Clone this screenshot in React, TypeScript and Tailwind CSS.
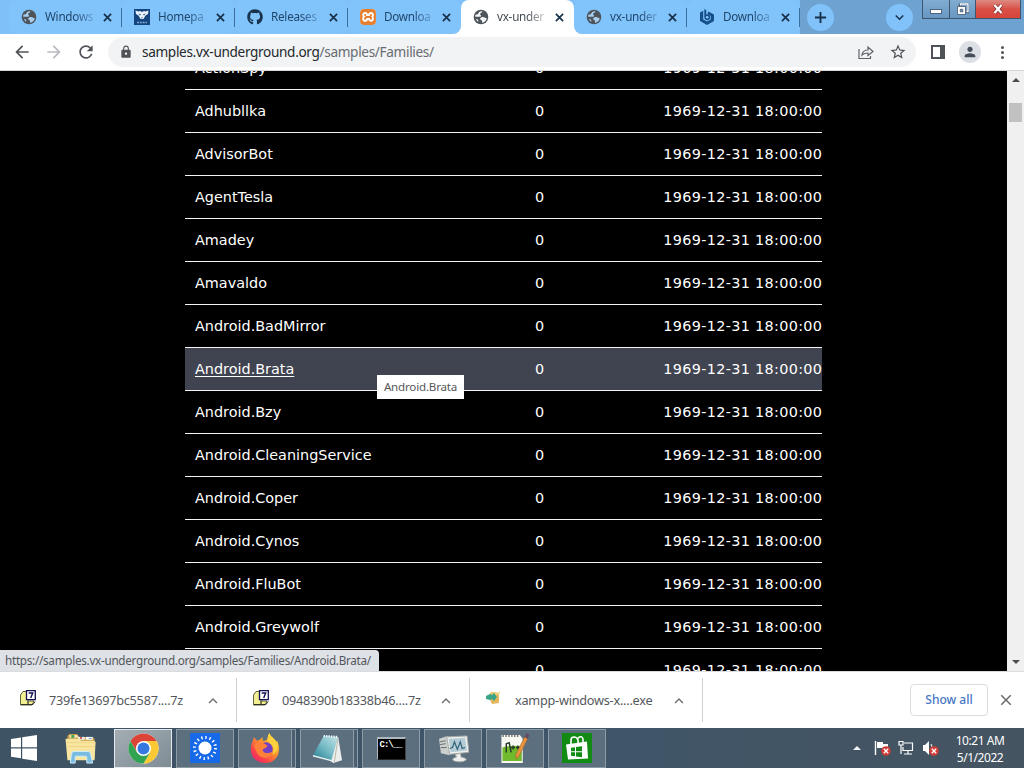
import React from 'react';
import { FaGithub } from 'react-icons/fa';
import { MdArrowBack, MdArrowForward, MdClose, MdExpandLess, MdExpandMore, MdLock, MdPerson, MdRefresh, MdStarBorder } from 'react-icons/md';
import { SiXampp } from 'react-icons/si';

const DATE = '1969-12-31 18:00:00';

const families = [
  'ActionSpy',
  'Adhubllka',
  'AdvisorBot',
  'AgentTesla',
  'Amadey',
  'Amavaldo',
  'Android.BadMirror',
  'Android.Brata',
  'Android.Bzy',
  'Android.CleaningService',
  'Android.Coper',
  'Android.Cynos',
  'Android.FluBot',
  'Android.Greywolf',
  '',
];

type TabInfo = { title: string; icon: React.ReactNode; active?: boolean };

const tabs: TabInfo[] = [
  { title: 'Windows', icon: <GlobeIcon land="#a9cdec" /> },
  { title: 'Homepa', icon: <WolfIcon /> },
  { title: 'Releases', icon: <FaGithub className="size-4 text-[#17334e]" /> },
  { title: 'Downloa', icon: <span className="flex size-4 items-center justify-center rounded-sm bg-white"><SiXampp className="size-4 rounded-sm text-[#e57e2e]" /></span> },
  { title: 'vx-under', icon: <GlobeIcon land="#f4f5f6" />, active: true },
  { title: 'vx-under', icon: <GlobeIcon land="#a9cdec" /> },
  { title: 'Downloa', icon: <HexIcon /> },
];

function GlobeIcon({ land }: { land: string }) {
  return (
    <svg viewBox="0 0 16 16" className="size-4 shrink-0">
      <circle cx="8" cy="8" r="7.300" fill="#4d545b" />
      <path d="M8 2.200c2.500 0 4.700 1.500 5.600 3.800-.8.200-1.300.9-2.300.7-.8-.2-.7-1-1.600-1-.8 0-.6 1.200-1.500 1.500-.8.300-1.600-.2-1.700-1 0-.9 1-.9 1-1.700 0-.7-.7-.8-.6-1.600z" fill="#4d545b" />
      <path d="M9.500 2.500C9 4 7.300 3.600 7.100 5c-.1 1 1.100 1 1 2-.1.900-1.400.7-2.300.7H2.200a6 6 0 0 1 .4-2.200C4 5.800 5 5.200 5.500 4c.3-.8 1-1.300 2-1.600.7-.2 1.400-.1 2 .1z" fill={land} />
      <path d="M8.200 8.600c1.300-.9 2.900-.5 3.900.2.700.5 1.300.5 1.700.4a6 6 0 0 1-4.600 4.500c-.5-.8.200-1.600-.4-2.300-.5-.6-1.300-.4-1.600-1.200-.2-.7.400-1.200 1-1.600z" fill={land} />
      <path d="M3 10c1 0 2 .3 2.300 1.200.2.700-.2 1-.1 1.700A6 6 0 0 1 3 10z" fill={land} />
    </svg>
  );
}

function WolfIcon() {
  return (
    <svg viewBox="0 0 16 16" className="size-4 shrink-0">
      <path d="M0 0h16v16H0z" fill="#14457f" />
      <path d="M1.500 1.500l3 1L6 2l2 1 2-1 1.500.5 3-1-.5 3.500-2.500 1.500L9.500 10h-3L4.500 6.500 2 5z" fill="#e9f2fa" />
      <path d="M4.500 4.500l2.500 1-1 1zM11.500 4.500L9 5.500l1 1zM7 8.500h2l-1 1z" fill="#14457f" />
      <path d="M3 13.500h10" stroke="#7fa6cd" strokeWidth="1.500" strokeDasharray="2 .8" />
    </svg>
  );
}

function HexIcon() {
  return (
    <svg viewBox="0 0 16 16" className="size-4 shrink-0">
      <path d="M1 3.500l3.200-1.800V10.500L8 12.600l3.800-2.100V6.900L8.500 5.200 9.300 2.500 15 5.400v6.700L8 16l-7-3.900z" fill="#174f8c" />
      <path d="M5.300 0l2 1.200v4.300A3 3 0 1 1 5.300 8.300z" fill="#174f8c" />
      <circle cx="8.200" cy="8.300" r="1.300" fill="#8accff" />
    </svg>
  );
}

function Tab({ title, icon, active }: TabInfo) {
  return (
    <div
      className={
        active
          ? 'relative z-10 flex h-[34px] w-[113px] items-center rounded-t-lg bg-white pl-3'
          : 'relative flex h-[34px] w-[113px] items-center rounded-lg bg-[#81c3fb] pl-3'
      }
    >
      {icon}
      <span
        className={
          active
            ? 'ml-2 w-[49px] text-[11.7px] tracking-[-0.25px] whitespace-nowrap text-[#454b52] [mask-image:linear-gradient(to_right,black_60%,rgba(0,0,0,0.2))]'
            : 'ml-2 w-[49px] text-[11.7px] tracking-[-0.25px] whitespace-nowrap text-[#1f466b] [mask-image:linear-gradient(to_right,black_60%,rgba(0,0,0,0.2))]'
        }
      >
        {title}
      </span>
      <svg viewBox="0 0 10 10" className="ml-[9px] size-[9px]">
        <path d="M1 1l8 8M9 1L1 9" stroke="#183149" strokeWidth="1.9" />
      </svg>
      {active && (
        <>
          <svg viewBox="0 0 8 8" className="absolute bottom-0 -left-2 size-2"><path d="M8 0v8H0a8 8 0 0 0 8-8z" fill="#fff" /></svg>
          <svg viewBox="0 0 8 8" className="absolute -right-2 bottom-0 size-2"><path d="M0 0v8h8a8 8 0 0 1-8-8z" fill="#fff" /></svg>
        </>
      )}
    </div>
  );
}

function Separator({ hidden }: { hidden: boolean }) {
  return <div className={hidden ? 'z-10 -ml-px h-5 w-px' : 'z-10 -ml-px h-[19px] w-px bg-[#3c6f9e]'} />;
}

function TabStrip() {
  return (
    <div className="flex h-[34px] bg-[#6ea3d1]">
      <div className="flex items-center bg-[#7fc0f8] pl-[9px]">
        {tabs.map((t, i) => (
          <React.Fragment key={i}>
            <Tab {...t} />
            <Separator hidden={i === 3 || i === 4} />
          </React.Fragment>
        ))}
      </div>
      <div className="ml-[7px] flex items-center">
        <div className="flex size-[27px] items-center justify-center rounded-full bg-[#81c2fa]">
          <svg viewBox="0 0 14 14" className="size-[13px]"><path d="M7 1v12M1 7h12" stroke="#173049" strokeWidth="2" /></svg>
        </div>
      </div>
      <div className="ml-auto flex items-center">
        <div className="flex size-[27px] items-center justify-center rounded-full bg-[#81c2fa]">
          <MdExpandMore className="size-[17px] text-[#173049]" />
        </div>
      </div>
      <div className="mr-[3px] ml-[9px] flex h-[19px] border border-t-0 border-[#3f5670]">
        <div className="flex w-[27px] items-center justify-center border-r border-[#3f5670] bg-linear-to-b from-[#82acd1] to-[#6897c2] pt-1">
          <div className="h-[5px] w-3 border border-[#50657c] bg-white" />
        </div>
        <div className="flex w-[26px] items-center justify-center border-r border-[#3f5670] bg-linear-to-b from-[#82acd1] to-[#6897c2]">
          <svg viewBox="0 0 12 12" className="size-3">
            <path d="M3 .5h8.500v8.500H9M3 3V.5" fill="none" stroke="#42566c" strokeWidth="2.600" />
            <path d="M3.500 2.500V1h7.500v7.500H9.500" fill="none" stroke="#fff" strokeWidth="1.300" />
            <path d="M.5 3.500h8v8h-8z" fill="#fff" stroke="#42566c" strokeWidth=".8" />
            <path d="M3.300 6.300h2.500v2.500H3.300z" fill="#7199bf" stroke="#42566c" strokeWidth=".8" />
          </svg>
        </div>
        <div className="flex w-[44px] items-center justify-center bg-linear-to-b from-[#dc8a83] via-[#d95047] to-[#d7453c]">
          <svg viewBox="0 0 12 10" className="h-[10px] w-3">
            <path d="M2.500 1l7 8M9.500 1l-7 8" stroke="#702b2b" strokeWidth="3.600" />
            <path d="M2.500 1l7 8M9.500 1l-7 8" stroke="#fff" strokeWidth="2.300" />
          </svg>
        </div>
      </div>
    </div>
  );
}

function Toolbar() {
  return (
    <div className="flex h-[37px] items-center border-b border-[#d5d7da] bg-white pl-3">
      <MdArrowBack className="size-5 text-[#4f5358]" />
      <MdArrowForward className="ml-3 size-5 text-[#b9bbbe]" />
      <MdRefresh className="ml-3 size-5 text-[#4f5358]" />
      <div className="ml-3 flex h-[30px] w-[808px] items-center rounded-full bg-[#f1f3f4] pl-[11px]">
        <MdLock className="size-[14px] text-[#4f5358]" />
        <div className="ml-[9px] text-[13.6px] tracking-[-0.33px] whitespace-nowrap text-[#25282c]">
          samples.vx-underground.org<span className="text-[#686c72]">/samples/Families/</span>
        </div>
        <svg viewBox="0 0 16 16" className="ml-auto size-4" fill="none" stroke="#5f6368" strokeWidth="1.200">
          <path d="M1 5v9.500h11.500V12M4 11c.5-3.500 2.500-5 6-5V3l5 4.500-5 4V9c-3 0-4.500.5-6 2z" />
        </svg>
        <MdStarBorder className="mr-[9px] ml-[15px] size-[18px] text-[#4f5358]" />
      </div>
      <svg viewBox="0 0 14 14" className="ml-[15px] h-[14px] w-[14px]">
        <path d="M1 1h12v12H1z" fill="none" stroke="#4f5358" strokeWidth="2" />
        <path d="M9 0h5v14H9z" fill="#4f5358" />
      </svg>
      <div className="ml-[14px] flex size-[22px] items-center justify-center rounded-full bg-[#dcdfe4]">
        <MdPerson className="size-4 text-[#454d59]" />
      </div>
      <div className="ml-5 flex flex-col gap-[2px]">
        <i className="size-[3px] rounded-full bg-[#4f5358]" />
        <i className="size-[3px] rounded-full bg-[#4f5358]" />
        <i className="size-[3px] rounded-full bg-[#4f5358]" />
      </div>
    </div>
  );
}

function Listing() {
  return (
    <div className="relative flex h-[600px] overflow-hidden bg-black">
      <div className="-mt-6 ml-[185px] w-[637px] font-['DejaVu_Sans',sans-serif] text-[14.4px] text-white">
        {families.map((name, i) => {
          const hovered = name === 'Android.Brata';
          return (
            <div key={i} className={hovered ? 'flex h-[43px] items-center border-b border-[#f4f4f4] bg-[#404350] pt-[2px]' : 'flex h-[43px] items-center border-b border-[#f4f4f4] pt-[2px]'}>
              <span className={hovered ? 'w-[350px] pl-[10px] underline underline-offset-2' : 'w-[350px] pl-[10px]'}>{name}</span>
              <span>0</span>
              <span className="-mr-[0.33px] ml-auto tracking-[0.33px]">{DATE}</span>
            </div>
          );
        })}
      </div>
      <div className="ml-auto flex w-[17px] flex-col items-center bg-[#f0f0f0]">
        <svg viewBox="0 0 8 4" className="mt-[7px] h-1 w-2"><path d="M0 4l4-4 4 4z" fill="#4c4c4c" /></svg>
        <div className="mt-[21px] h-[19px] w-[13px] bg-[#c1c1c1]" />
        <svg viewBox="0 0 8 4" className="mt-auto mb-[7px] h-1 w-2"><path d="M0 0l4 4 4-4z" fill="#4c4c4c" /></svg>
      </div>
      <div className="absolute top-[304px] left-[377px] flex h-6 w-[87px] items-center justify-center bg-white text-[11.6px] tracking-[-0.2px] text-[#575757]">Android.Brata</div>
      <div className="absolute bottom-0 left-0 flex h-[21px] w-[379px] items-center rounded-tr-sm bg-[#dee1e6] pl-[5px] text-[11.7px] tracking-[-0.28px] whitespace-nowrap text-[#53575c]">
        https://samples.vx-underground.org/samples/Families/Android.Brata/
      </div>
    </div>
  );
}

function ArchiveIcon() {
  return (
    <svg viewBox="0 0 16 16" className="size-4">
      <path d="M.5 5L3 1.500h5V15H.5zM8 11h6l-2 4H8z" fill="#f1ef91" stroke="#4f5030" strokeWidth=".9" />
      <path d="M1 14.500h12l2-3" fill="none" stroke="#303020" />
      <path d="M6.500.7h8.800v9H6.500z" fill="#fff" stroke="#121252" strokeWidth="1.300" />
      <path d="M8.700 3h4L10.700 8" fill="none" stroke="#121252" strokeWidth="1.400" />
    </svg>
  );
}

function XamppSetupIcon() {
  return (
    <svg viewBox="0 0 16 16" className="size-4">
      <path d="M4 3l2-1 7 1v10l-7 1-2-4z" fill="#e4b75e" />
      <path d="M5 2l7 1 2-2-1 4H5z" fill="#f0cb73" />
      <path d="M0 6l4-2 2 1 2-2 3 4-3 4-2-2-2 1-4-1z" fill="#38a58b" />
    </svg>
  );
}

const downloads = [
  { name: '739fe13697bc5587....7z', icon: <ArchiveIcon /> },
  { name: '0948390b18338b46....7z', icon: <ArchiveIcon /> },
  { name: 'xampp-windows-x....exe', icon: <XamppSetupIcon /> },
];

function DownloadShelf() {
  return (
    <div className="flex h-[57px] items-center border-t border-[#dadce0] bg-white pl-1">
      {downloads.map((d) => (
        <div key={d.name} className="flex h-11 w-[233px] items-center border-r border-[#cfd0d2] pl-4">
          <span className="-mt-1">{d.icon}</span>
          <span className="mt-[2px] ml-[13px] w-[150px] text-[12.7px] tracking-[-0.24px] whitespace-nowrap text-[#55585c]">{d.name}</span>
          <MdExpandLess className="mt-px ml-[5px] size-[18px] text-[#707070]" />
        </div>
      ))}
      <button className="ml-auto h-8 w-[78px] rounded-[4px] border border-[#dadce0] text-[12px] font-medium text-[#4577c2]">Show all</button>
      <MdClose className="mr-[9px] ml-[9px] size-[18px] text-[#6a6a6a]" />
    </div>
  );
}

function ExplorerIcon() {
  return (
    <svg viewBox="0 0 34 32" className="h-[31px] w-[34px]">
      <path d="M3 3l2-2h8l2 3h14l2 2v20H3z" fill="#c99d46" />
      <path d="M5 2h8l2 3H5z" fill="#f0e1a8" />
      <path d="M7 2h3v3H7z" fill="#47a657" /><path d="M14 4h7v3h-7z" fill="#eee" /><path d="M16 4h2v2h-2z" fill="#c94f3e" /><path d="M22 4h7v3h-7z" fill="#fff" /><path d="M25 5h3v1h-3z" fill="#5b97d5" />
      <path d="M1 6h14l2 2h14l1 2-1 18H3z" fill="#f8e6a0" />
      <path d="M2 10h30M3 14h28" stroke="#eed583" />
      <path d="M6 31l1-9q0-3 3-3h14q3 0 3 3l2 9h-6v-6q0-1-1-1H12q-1 0-1 1v6z" fill="#79bce0" stroke="#d0f0ff" />
    </svg>
  );
}

function ChromeIcon() {
  return (
    <svg viewBox="0 0 32 32" className="size-[31px]">
      <circle cx="16" cy="16" r="15.500" fill="#fff" />
      <path d="M2.600 8.200A15.500 15.500 0 0 1 29.400 8.200L16 8.500 9.300 19.900z" fill="#dc4437" />
      <path d="M29.400 8.200A15.500 15.500 0 0 1 16 31.500L22.800 20 16 8.200z" fill="#fbc934" />
      <path d="M2.600 8.200A15.500 15.500 0 0 0 16 31.500L22.800 20 9.300 20z" fill="#31a351" />
      <circle cx="16" cy="16" r="7.800" fill="#fff" />
      <circle cx="16" cy="16" r="6.200" fill="#3578df" />
    </svg>
  );
}

function SunIcon() {
  return (
    <svg viewBox="0 0 30 30" className="size-[30px]">
      <path d="M0 0h30v30H0z" fill="#1769e8" />
      <circle cx="15" cy="15" r="6.500" fill="#fff" />
      <circle cx="15" cy="15" r="10.500" fill="none" stroke="#fff" strokeWidth="3" strokeDasharray="1.400 2.723" />
    </svg>
  );
}

function FirefoxIcon() {
  return (
    <svg viewBox="0 0 32 32" className="size-[31px]">
      <defs>
        <linearGradient id="fire" x1="1" y1="0" x2="0.2" y2="1">
          <stop offset="0" stopColor="#ffef45" />
          <stop offset=".45" stopColor="#ff9b2c" />
          <stop offset=".8" stopColor="#f9404a" />
          <stop offset="1" stopColor="#e62a70" />
        </linearGradient>
      </defs>
      <path d="M20 0c1 4 5 5 7 9l1-1c5 11 0 23-12 23C6 31 0 24 1 15c0-3 1-5 2-7l1-4 3 4 3-1 3-3v4h2c4 0 3-5 5-8z" fill="url(#fire)" />
      <circle cx="16.500" cy="16.500" r="7" fill="#7141c4" />
      <path d="M4 13c3-5 8-5 11-2l3 2c0 2-3 3-5 4 0 4 6 5 10 2-1 6-9 9-14 4-3-3-3-6-5-10z" fill="#ff8038" />
      <path d="M20 0c-3 5-2 8 1 11 4 3 4 7 2 12 6-4 7-10 4-14-2-4-6-5-7-9z" fill="#ffd23d" />
    </svg>
  );
}

function NotepadIcon() {
  return (
    <svg viewBox="0 0 32 32" className="size-[31px]">
      <defs>
        <linearGradient id="page" x1="1" y1="0" x2="0.1" y2="1">
          <stop offset="0" stopColor="#c5e4e8" />
          <stop offset=".55" stopColor="#72b9c4" />
          <stop offset="1" stopColor="#297f91" />
        </linearGradient>
      </defs>
      <path d="M27 4l4 24-9 3-4-3z" fill="#eceeed" />
      <path d="M27 5l-4 25" stroke="#bcb8a8" />
      <path d="M12 3l15 1-7 24L1 23z" fill="url(#page)" />
      <path d="M12 3l15 1" stroke="#eef8fa" strokeWidth="2" strokeDasharray="1.500 1" />
      <path d="M1 23.500l19 5" stroke="#e6f2f3" strokeWidth="1.500" />
    </svg>
  );
}

function ConsoleIcon() {
  return (
    <div className="h-[23px] w-[29px] border border-t-2 border-[#aeb8bf] border-r-[#414141] border-b-[#252525] bg-black pl-[2px] text-left font-['Liberation_Mono',monospace] text-[9px] leading-[12px] font-bold tracking-[-1px] whitespace-nowrap text-white">
      C:\__
    </div>
  );
}

function MonitorIcon() {
  return (
    <svg viewBox="0 0 32 30" className="h-[29px] w-[31px]">
      <path d="M1 5l9-3 2 20-9-2z" fill="#cbd0cf" />
      <path d="M2 8l6-1M2 11l6-1M3 14h6" stroke="#68716f" />
      <path d="M9 3l21-1 2 17-20 2z" fill="#eff1ee" stroke="#a6aaa7" />
      <path d="M11 5l17-1 2 13-17 2z" fill="#b4ccd6" />
      <path d="M12 15l3-1 2-6 3 8 3-8 2 7 3-1" fill="none" stroke="#315f76" strokeWidth="1.200" />
      <path d="M18 21l5-1 1 4q6 1 5 3-4 3-12 1-3-1-1-3l3-1z" fill="#eceeed" stroke="#a8aaa8" />
    </svg>
  );
}

function NotepadPlusIcon() {
  return (
    <svg viewBox="0 0 30 32" className="h-[31px] w-[30px]">
      <path d="M1 2h19l3 4v25H1z" fill="#f7f9f2" />
      <path d="M2 15q10-3 20-1v15H2z" fill="#70ba2c" />
      <path d="M2 3h17" stroke="#777" strokeWidth="2" strokeDasharray="1.500 1.500" />
      <path d="M6 20v-9l3-1 2 10M11 15h4M13 13v4M16 15h4M18 13v4" fill="none" stroke="#253728" strokeWidth="1.500" />
      <path d="M25 4l3 2-9 18-3 3 0-5z" fill="#e7943e" stroke="#aa5e2a" strokeWidth=".6" />
      <path d="M25 4l2-4L30 2l-2 4z" fill="#624c62" />
    </svg>
  );
}

function StoreIcon() {
  return (
    <svg viewBox="0 0 30 30" className="size-[30px]">
      <path d="M0 0h30v30H0z" fill="#118b13" />
      <path d="M4 11.500l21-3 1 17-20 1z" fill="#fff" />
      <path d="M9 12V7q0-3 3-3t4 3v4M16 5q4-3 5 1v4" fill="none" stroke="#fff" strokeWidth="1.600" />
      <path d="M9 14.800l4-.5v4H9zM14 14.100l6-.9v5.100h-6zM9 19.300h4v4l-4-.5zM14 19.300h6v5l-6-.8z" fill="#118b13" />
    </svg>
  );
}

const taskButton = 'flex h-[39px] w-[58px] items-center justify-center border border-[#8e9ba5] bg-[#5c6f7e]';

function StackedTask({ children }: { children: React.ReactNode }) {
  return (
    <div className="flex w-[58px]">
      <div className="flex h-[39px] w-[54px] items-center justify-center border border-[#8e9ba5] bg-[#5c6f7e]">{children}</div>
      <div className="h-[39px] w-1 border-y border-r border-[#8e9ba5] bg-[#4b6072]" />
    </div>
  );
}

function Badge() {
  return (
    <svg viewBox="0 0 10 10" className="absolute right-[-1px] bottom-0 size-[10px]">
      <circle cx="5" cy="5" r="4.800" fill="#cf3c35" />
      <path d="M2.800 2.800l4.400 4.400M7.200 2.800L2.800 7.200" stroke="#fff" strokeWidth="1.400" />
    </svg>
  );
}

function Taskbar() {
  return (
    <div className="flex h-10 items-center bg-linear-to-r from-[#3e5364] via-[#3e566a] to-[#455461]">
      <svg viewBox="0 0 26 26" className="ml-[11px] size-[26px]">
        <path d="M0 4l10-1.500v9.800H0zM11.200 2.300L26 0v12.300H11.200zM0 13.500h10v9.800L0 21.800zM11.200 13.500H26V26l-14.800-2.300z" fill="#fff" />
      </svg>
      <div className="ml-[27px]"><ExplorerIcon /></div>
      <div className="ml-4 flex gap-1">
        <div className="flex h-[39px] w-[58px] items-center justify-center border border-[#e6eaec] bg-linear-to-br from-[#a3adb3] to-[#7f8c95]"><ChromeIcon /></div>
        <div className={taskButton}><SunIcon /></div>
        <StackedTask><FirefoxIcon /></StackedTask>
        <StackedTask><NotepadIcon /></StackedTask>
        <div className={taskButton}><ConsoleIcon /></div>
        <div className={taskButton}><MonitorIcon /></div>
        <div className={taskButton}><NotepadPlusIcon /></div>
        <div className={taskButton}><StoreIcon /></div>
      </div>
      <svg viewBox="0 0 8 4" className="ml-auto h-1 w-2"><path d="M0 4l4-4 4 4z" fill="#f4f6f8" /></svg>
      <div className="relative ml-[13px] size-4">
        <svg viewBox="0 0 16 16" className="size-4">
          <path d="M1.500 1v14" stroke="#fff" strokeWidth="1.400" />
          <path d="M3 2h6v2h5v6H8V8H3z" fill="#fff" />
        </svg>
        <Badge />
      </div>
      <svg viewBox="0 0 16 16" className="ml-2 size-4" fill="none" stroke="#fff" strokeWidth="1.200">
        <path d="M6 3h8.500v7.500H5V7M10 10.500V14M6 14h8M1 1.500h4v3.500H1zM3 5v9" />
      </svg>
      <div className="relative ml-2 size-4">
        <svg viewBox="0 0 16 16" className="size-4">
          <path d="M1 5h2l4-4v14l-4-4H1z" fill="#fff" />
          <path d="M9 4q3 4 0 8" fill="none" stroke="#fff" />
        </svg>
        <Badge />
      </div>
      <div className="mt-[2px] mr-[16px] ml-[14px] w-[56px] text-center text-[12px] leading-[17px] tracking-[-0.45px] whitespace-nowrap text-white">
        10:21 AM
        <br />
        5/1/2022
      </div>
    </div>
  );
}

export default function App() {
  return (
    <div className="flex h-[768px] w-[1024px] flex-col overflow-hidden font-['Noto_Sans','Open_Sans',sans-serif]">
      <TabStrip />
      <Toolbar />
      <Listing />
      <DownloadShelf />
      <Taskbar />
    </div>
  );
}
